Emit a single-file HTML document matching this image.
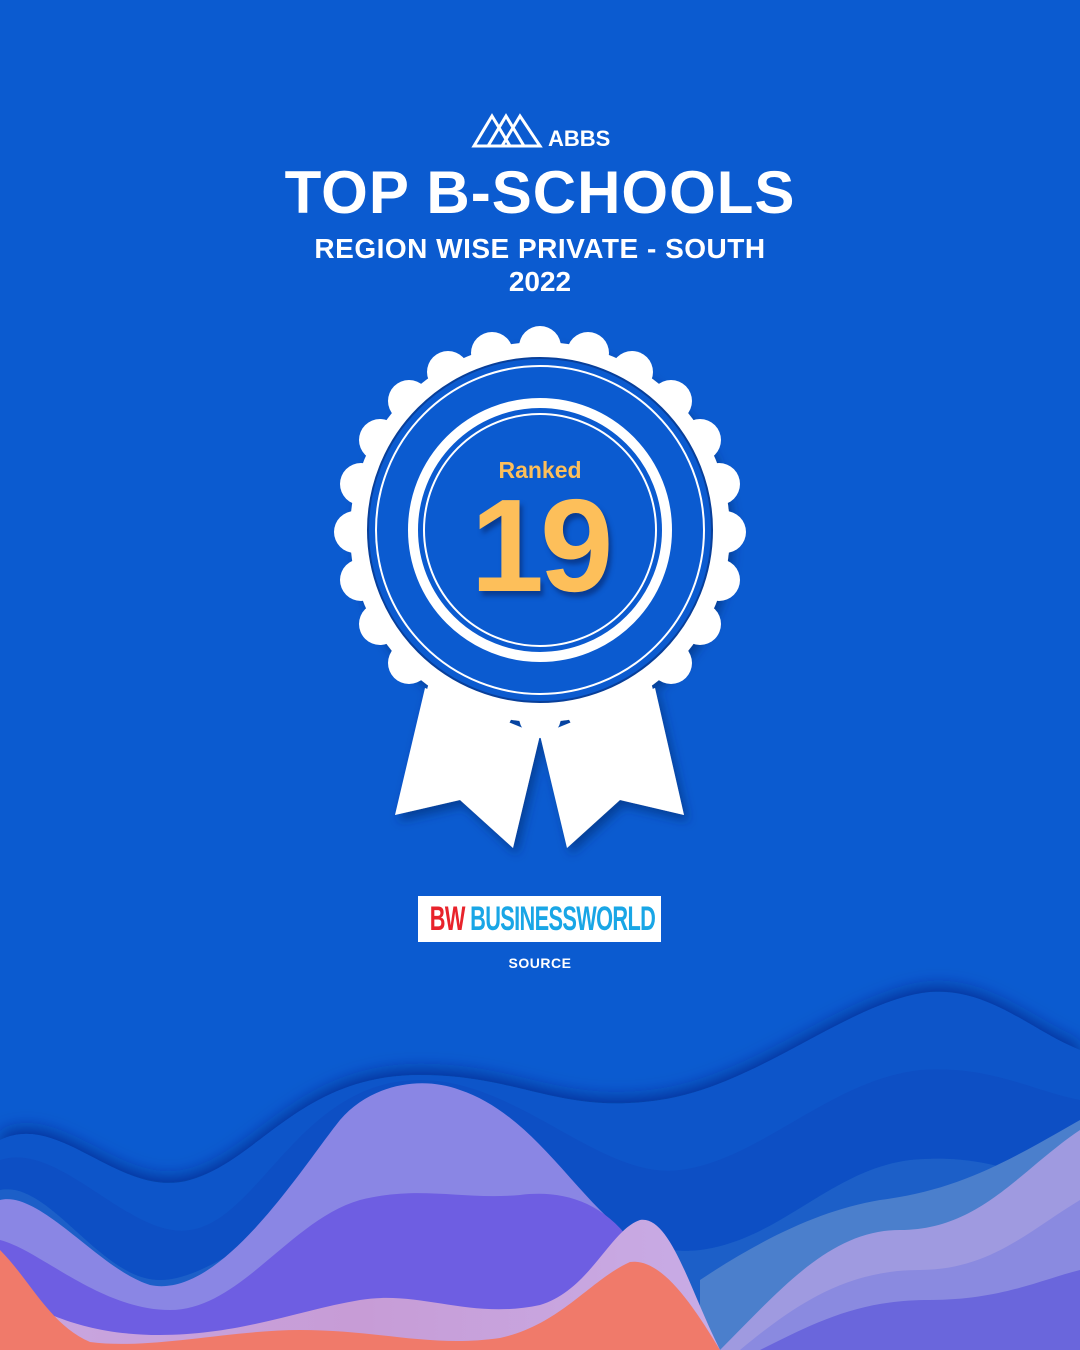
<!DOCTYPE html>
<html><head><meta charset="utf-8"><style>
html,body{margin:0;padding:0}
body{width:1080px;height:1350px;background:#0b5bd0;position:relative;overflow:hidden;font-family:"Liberation Sans",sans-serif;color:#fff}
.t{position:absolute;left:0;width:1080px;text-align:center;font-weight:bold;white-space:nowrap}
</style></head><body>
<svg width="1080" height="1350" style="position:absolute;left:0;top:0">
<defs>
<filter id="sh" x="-20%" y="-20%" width="140%" height="140%"><feDropShadow dx="4" dy="6" stdDeviation="5" flood-color="#062a70" flood-opacity="0.6"/></filter>
<filter id="ws" x="-10%" y="-30%" width="120%" height="160%"><feDropShadow dx="0" dy="-6" stdDeviation="8" flood-color="#02207a" flood-opacity="0.6"/></filter>
<linearGradient id="pk" x1="0" x2="1"><stop offset="0" stop-color="#c9a6e0"/><stop offset="0.5" stop-color="#c79cd6"/><stop offset="1" stop-color="#c8ace6"/></linearGradient>
</defs>
<g fill="none" stroke="#fff" stroke-width="3">
<path d="M474 146 L492 116 L510 146 Z M488 146 L506 116 L524 146 Z M502 146 L520 116 L540 146 Z"/>
</g>
<g filter="url(#ws)">
<path d="M0 1350 L0 1140 C60 1110 120 1200 190 1180 C260 1160 300 1075 420 1075 C520 1075 560 1115 660 1100 C760 1085 850 1000 930 992 C990 988 1030 1030 1080 1050 L1080 1350Z" fill="#0c55c9"/>
<path d="M0 1350 L0 1160 C60 1140 130 1240 190 1230 C260 1220 300 1080 420 1080 C520 1080 600 1180 680 1170 C760 1160 830 1080 920 1070 C990 1065 1030 1090 1080 1100 L1080 1350Z" fill="#0b4fc4"/>
<path d="M0 1350 L0 1190 C50 1180 100 1280 160 1280 C230 1280 330 1160 430 1170 C520 1180 620 1260 700 1250 C780 1240 830 1170 910 1160 C990 1152 1030 1180 1080 1190 L1080 1350Z" fill="#1a5fc8"/>
</g>
<path d="M700 1350 L700 1280 C760 1240 820 1210 880 1200 C960 1190 1010 1160 1080 1120 L1080 1350Z" fill="#4b7fcc"/>
<path d="M720 1350 C780 1290 830 1230 900 1230 C980 1230 1020 1170 1080 1130 L1080 1350Z" fill="#9f9ae0"/>
<path d="M740 1350 C800 1300 850 1270 920 1270 C990 1270 1030 1230 1080 1200 L1080 1350Z" fill="#8a8ae0"/>
<path d="M760 1350 C820 1320 860 1300 930 1300 C1000 1300 1040 1280 1080 1270 L1080 1350Z" fill="#6a66dc"/>
<path d="M0 1350 L0 1200 C40 1190 100 1270 150 1285 C220 1300 300 1170 340 1120 C370 1085 420 1075 460 1090 C520 1110 560 1170 600 1210 C650 1260 690 1280 720 1350 Z" fill="#8a86e4"/>
<path d="M0 1350 L0 1240 C40 1250 100 1310 170 1310 C240 1310 290 1220 360 1200 C420 1185 460 1200 520 1195 C560 1190 600 1200 630 1240 C670 1290 690 1310 710 1350 Z" fill="#6e5ee2"/>
<path d="M0 1350 L0 1290 C40 1310 80 1335 160 1335 C240 1335 300 1310 360 1300 C420 1290 470 1320 540 1305 C590 1290 610 1230 640 1220 C670 1215 690 1290 720 1350 Z" fill="url(#pk)"/>
<path d="M0 1350 L0 1250 C30 1280 50 1325 90 1342 C150 1350 230 1330 300 1330 C380 1330 430 1348 500 1338 C560 1325 590 1280 630 1262 C660 1258 690 1300 720 1350 Z" fill="#f07a6a"/>
<g filter="url(#sh)">
<path d="M425 688 L395 815 L460 800 L513 848 L540 735 Z M655 688 L684 815 L620 800 L567 848 L540 735 Z" fill="#fff"/>
<circle cx="540" cy="532" r="190" fill="#fff"/>
</g>
<g fill="#fff">
<circle cx="540" cy="347" r="21"/><circle cx="588" cy="353" r="21"/><circle cx="632" cy="372" r="21"/><circle cx="671" cy="401" r="21"/><circle cx="700" cy="440" r="21"/><circle cx="719" cy="484" r="21"/><circle cx="725" cy="532" r="21"/><circle cx="719" cy="580" r="21"/><circle cx="700" cy="624" r="21"/><circle cx="671" cy="663" r="21"/><circle cx="632" cy="692" r="21"/><circle cx="588" cy="711" r="21"/><circle cx="540" cy="717" r="21"/><circle cx="492" cy="711" r="21"/><circle cx="448" cy="692" r="21"/><circle cx="409" cy="663" r="21"/><circle cx="380" cy="624" r="21"/><circle cx="361" cy="580" r="21"/><circle cx="355" cy="532" r="21"/><circle cx="361" cy="484" r="21"/><circle cx="380" cy="440" r="21"/><circle cx="409" cy="401" r="21"/><circle cx="448" cy="372" r="21"/><circle cx="492" cy="353" r="21"/>
</g>
<circle cx="540" cy="530" r="172" fill="#0b5bd0" stroke="#083f9a" stroke-width="2"/>
<circle cx="540" cy="530" r="164" fill="none" stroke="#fff" stroke-width="2"/>
<circle cx="540" cy="530" r="127" fill="none" stroke="#fff" stroke-width="10"/>
<circle cx="540" cy="530" r="116" fill="none" stroke="#fff" stroke-width="2"/>
</svg>
<div class="t" style="top:126px;left:548px;width:auto;font-size:22px;">ABBS</div>
<div class="t" style="top:158px;font-size:60px;letter-spacing:1px;">TOP B-SCHOOLS</div>
<div class="t" style="top:233px;font-size:28px;letter-spacing:0.5px;">REGION WISE PRIVATE - SOUTH</div>
<div class="t" style="top:266px;font-size:28px;">2022</div>
<div class="t" style="top:457px;font-size:23px;color:#fdbf5a;">Ranked</div>
<div class="t" style="top:470px;font-size:132px;color:#fdbf5a;letter-spacing:-4px;text-shadow:3px 5px 5px rgba(5,30,90,.5)">19</div>
<div style="position:absolute;left:418px;top:896px;width:243px;height:46px;background:#fff;"></div>
<div style="position:absolute;left:368px;top:896px;width:343px;height:46px;text-align:center;white-space:nowrap;font-family:'Liberation Sans Narrow','Liberation Sans',sans-serif;font-weight:bold;font-size:34px;line-height:46px;transform:scaleX(0.64);letter-spacing:-1px"><span style="color:#e8232b">BW</span> <span style="color:#19a6e6">BUSINESSWORLD</span></div>
<div class="t" style="top:955px;font-size:14px;letter-spacing:0.5px;">SOURCE</div>
</body></html>
